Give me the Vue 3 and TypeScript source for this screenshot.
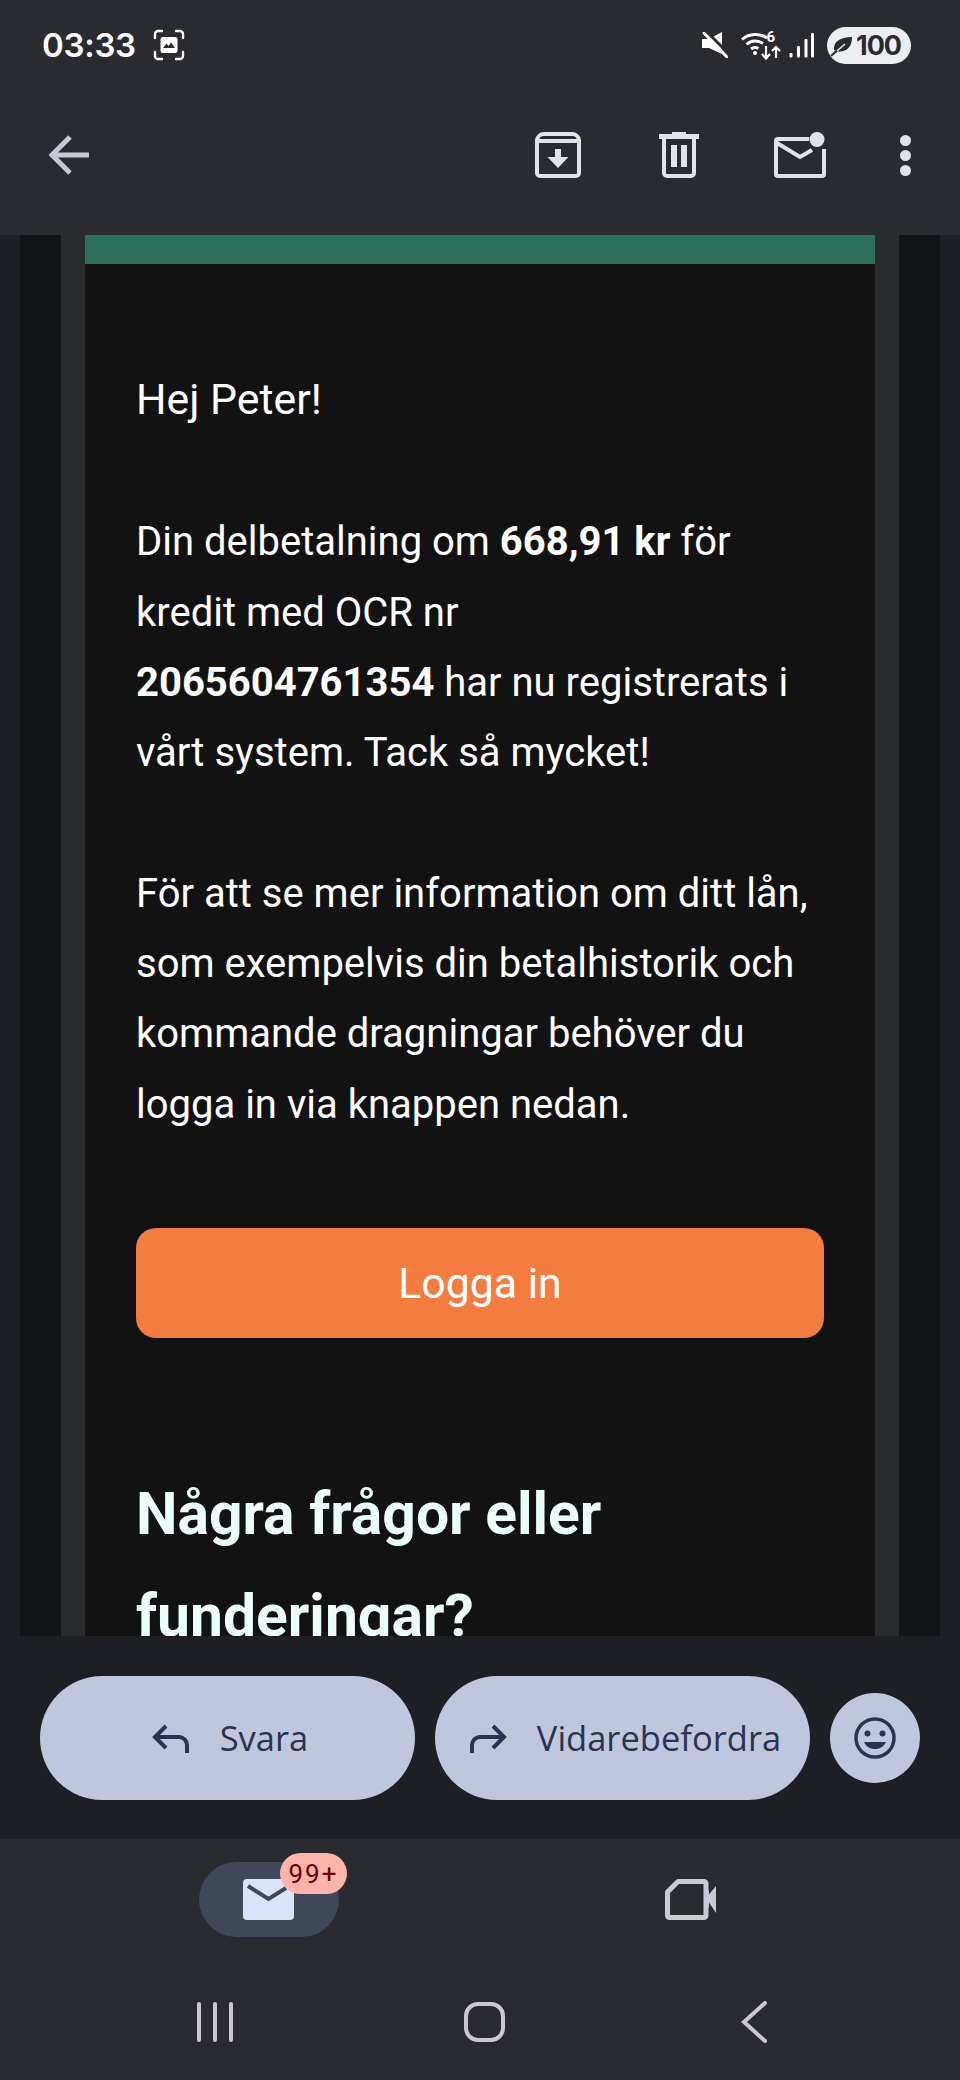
<script setup lang="ts">
const paragraphs = 1
void paragraphs
</script>

<template>
  <div class="phone">
    <header class="top">
      <div class="status">
        <span class="time">03:33</span>
        <svg class="shot" width="32" height="32" viewBox="0 0 32 32">
          <path d="M2 9V5a3 3 0 0 1 3-3h4M23 2h4a3 3 0 0 1 3 3v4M30 23v4a3 3 0 0 1-3 3h-4M9 30H5a3 3 0 0 1-3-3v-4" fill="none" stroke="#fff" stroke-width="2.400" stroke-linecap="round"/>
          <rect x="7.500" y="8" width="17" height="16" rx="2.500" fill="#fff"/>
          <path d="M10 19l3.500-4.500 2 2.500 2.500-3.500 4 5.500z" fill="#2a2b31"/>
        </svg>
        <div class="status-right">
          <svg width="26" height="26" viewBox="0 0 26 26">
            <path d="M0 7h7L20 0v22L7 16H0z" fill="#fff"/>
            <path d="M6 1l21 21" stroke="#2a2b31" stroke-width="3"/>
            <path d="M2 1l23 24" stroke="#fff" stroke-width="3" stroke-linecap="round"/>
          </svg>
          <svg class="wifi" width="40" height="34" viewBox="0 -4 40 34">
            <path d="M1 8.500C8 2 19 2 26 7M5.500 13.500C10.500 9 17 9 22 12.500M10 18c2.500-2 5-2 7.500-.5" fill="none" stroke="#fff" stroke-width="3"/>
            <circle cx="14" cy="22" r="2" fill="#fff"/>
            <text x="25.500" y="11" class="six">6</text>
            <path d="M25 15v12M21 23l4 4.500 4-4.500M35 27V16M31 20l4-4 4 4" fill="none" stroke="#fff" stroke-width="2.200"/>
          </svg>
          <svg width="26" height="26" viewBox="0 0 26 26">
            <g fill="#fff">
              <rect x="0.500" y="21" width="3" height="4.500" rx="1"/>
              <rect x="8" y="14" width="3" height="11.500" rx="1"/>
              <rect x="15.500" y="7" width="3" height="18.500" rx="1"/>
              <rect x="22" y="1" width="3" height="24.500" rx="1"/>
            </g>
          </svg>
          <div class="battery">
            <svg width="24" height="24" viewBox="0 0 24 24">
              <path d="M4 17C3 9 10 4 22 4c0 10-5 15-14 14.500z" fill="#2a2b31"/>
              <path d="M1 23L13 12" stroke="#2a2b31" stroke-width="2.200"/>
              <path d="M7 18l8-7" stroke="#eceef1" stroke-width="1.500"/>
            </svg>
            <span>100</span>
          </div>
        </div>
      </div>
      <div class="toolbar">
        <svg class="back" width="40" height="40" viewBox="0 0 40 40">
          <path d="M21 2L3 20l18 18M3 20h37" fill="none" stroke="#c7c8d6" stroke-width="5"/>
        </svg>
        <div class="actions">
          <div class="action">
            <svg width="46" height="46" viewBox="0 0 46 46">
              <path d="M9 2h28a7 7 0 0 1 7 6v33a3 3 0 0 1-3 3H5a3 3 0 0 1-3-3V8a7 7 0 0 1 7-6z" fill="none" stroke="#e2e3e9" stroke-width="4" stroke-linejoin="round"/>
              <path d="M3 9h40" stroke="#e2e3e9" stroke-width="4"/>
              <path d="M20 17h6v8h7.500L23 36 12.500 25H20z" fill="#e2e3e9"/>
            </svg>
          </div>
          <div class="action">
            <svg width="40" height="46" viewBox="0 0 40 46">
              <path d="M0 2h13V0h14v2h13v5H0z" fill="#e2e3e9"/>
              <path d="M5 7v34a3 3 0 0 0 3 3h24a3 3 0 0 0 3-3V7" fill="none" stroke="#e2e3e9" stroke-width="4"/>
              <rect x="12" y="13" width="6" height="22" fill="#e2e3e9"/>
              <rect x="22" y="13" width="6" height="22" fill="#e2e3e9"/>
            </svg>
          </div>
          <div class="action">
            <svg width="52" height="46" viewBox="0 0 52 46">
              <path d="M35 7H4a2 2 0 0 0-2 2v33a2 2 0 0 0 2 2h44a2 2 0 0 0 2-2V17" fill="none" stroke="#e2e3e9" stroke-width="4"/>
              <path d="M3 11l23 14 12-7" fill="none" stroke="#e2e3e9" stroke-width="4"/>
              <circle cx="43" cy="7.500" r="7.500" fill="#e2e3e9"/>
            </svg>
          </div>
          <div class="action dots">
            <i></i><i></i><i></i>
          </div>
        </div>
      </div>
    </header>

    <main class="viewport">
      <div class="mail-frame">
        <div class="outer">
          <div class="inner">
            <div class="body">
              <div class="stripe"></div>
              <div class="content">
                <p class="hello">Hej Peter!</p>
                <p>Din delbetalning om <b>668,91 kr</b> för kredit med OCR nr<br><b>2065604761354</b> har nu registrerats i vårt system. Tack så mycket!</p>
                <p>För att se mer information om ditt lån, som exempelvis din betalhistorik och kommande dragningar behöver du logga in via knappen nedan.</p>
                <a class="cta">Logga in</a>
                <h2>Några frågor eller funderingar?</h2>
              </div>
            </div>
          </div>
        </div>
      </div>
    </main>

    <section class="reply">
      <button class="pill">
        <svg width="38" height="30" viewBox="0 0 38 30">
          <path d="M14 2L3 13l11 11M3 13h24a8 8 0 0 1 8 8v8" fill="none" stroke="#2b3350" stroke-width="4"/>
        </svg>
        <span>Svara</span>
      </button>
      <button class="pill">
        <svg width="38" height="30" viewBox="0 0 38 30">
          <path d="M24 2l11 11-11 11M35 13H11a8 8 0 0 0-8 8v8" fill="none" stroke="#2b3350" stroke-width="4"/>
        </svg>
        <span>Vidarebefordra</span>
      </button>
      <button class="emoji">
        <svg width="42" height="42" viewBox="0 0 42 42">
          <circle cx="21" cy="21" r="19" fill="none" stroke="#2b3350" stroke-width="3.500"/>
          <circle cx="13.500" cy="16.500" r="3" fill="#2b3350"/>
          <circle cx="28.500" cy="16.500" r="3" fill="#2b3350"/>
          <path d="M10 25h22c-2 4.500-6 7-11 7s-9-2.500-11-7z" fill="#2b3350"/>
        </svg>
      </button>
    </section>

    <nav class="bottom">
      <div class="tabs">
        <div class="tab">
          <div class="tab-pill">
            <svg width="51" height="41" viewBox="0 0 51 41">
              <rect width="51" height="41" rx="4" fill="#dce2f9"/>
              <path d="M5 7l20.500 13L43 9" fill="none" stroke="#3f4759" stroke-width="4"/>
            </svg>
            <span class="badge">99+</span>
          </div>
        </div>
        <div class="tab">
          <svg width="52" height="41" viewBox="0 0 52 41">
            <path d="M13 2.500h26a2 2 0 0 1 2 2v32a2 2 0 0 1-2 2H4.500a2 2 0 0 1-2-2V13z" fill="none" stroke="#c9cad6" stroke-width="5" stroke-linejoin="round"/>
            <path d="M41 19L51 7v27z" fill="#c9cad6"/>
            <path d="M40 14l4-3v18l-4-3z" fill="#c9cad6"/>
          </svg>
        </div>
      </div>
      <div class="sysnav">
        <div class="sys">
          <svg width="38" height="40" viewBox="0 0 38 40">
            <path d="M3 2v36M19 2v36M35 2v36" stroke="#c9c9cf" stroke-width="4" stroke-linecap="round"/>
          </svg>
        </div>
        <div class="sys">
          <div class="home"></div>
        </div>
        <div class="sys">
          <svg width="26" height="42" viewBox="0 0 26 42">
            <path d="M24 2L3 21l21 19" fill="none" stroke="#c9c9cf" stroke-width="4" stroke-linecap="round"/>
          </svg>
        </div>
      </div>
    </nav>
  </div>
</template>

<style>
html, body { margin: 0; background: #2a2b31; }
</style>

<style scoped>
.phone {
  width: 960px;
  height: 2080px;
  display: flex;
  flex-direction: column;
  overflow: hidden;
  background: #2a2b31;
  font-family: Roboto, "Liberation Sans", sans-serif;
}
.top { height: 235px; flex: none; background: #2a2b31; }
.status {
  height: 90px;
  display: flex;
  align-items: center;
  padding: 0 49px 0 42px;
  box-sizing: border-box;
}
.time {
  font-family: Inter, Roboto, sans-serif;
  font-size: 33px;
  font-weight: 600;
  color: #fff;
  letter-spacing: -0.3px;
}
.shot { margin-left: 17px; }
.status-right { margin-left: auto; display: flex; align-items: center; gap: 14px; }
.wifi { margin-top: -2px; margin-left: -1px; margin-right: -6px; }
.six { font: 700 15px Roboto, sans-serif; fill: #fff; }
.battery {
  width: 84px;
  height: 37px;
  border-radius: 19px;
  background: #eceef1;
  display: flex;
  align-items: center;
  padding-left: 3px;
  box-sizing: border-box;
  margin-left: -2px;
  color: #2a2b31;
  font-family: Inter, Roboto, sans-serif;
  font-size: 27px;
  font-weight: 700;
  letter-spacing: -1px;
}
.battery span { margin-left: 2px; }
.toolbar { height: 145px; display: flex; align-items: flex-start; padding-left: 49px; box-sizing: border-box; padding-top: 45px; }
.back { flex: none; }
.actions { margin-left: auto; display: flex; padding-right: 10px; margin-top: -5px; }
.action { width: 121px; height: 50px; display: flex; align-items: center; justify-content: center; }
.action.dots { width: 90px; flex-direction: column; gap: 4px; }
.dots i { width: 11px; height: 11px; border-radius: 50%; background: #e2e3e9; }

.viewport { flex: none; height: 1401px; overflow: hidden; background: #1e1f24; }
.mail-frame { padding: 0 20px; }
.outer { background: #121317; padding: 0 41px; }
.inner { background: #2a2b2d; padding: 0 24px; }
.body { background: #121212; height: 1500px; }
.stripe { height: 29px; background: #2d6f5b; }
.content { padding: 100px 51px 0; color: #fff; font-size: 40px; line-height: 70.3px; }
.content p { margin: 0 0 70.3px; }
.content .hello { font-size: 42.800px; margin-bottom: 73px; }
.content b { font-weight: 700; }
.cta {
  display: flex;
  align-items: center;
  justify-content: center;
  height: 110px;
  border-radius: 20px;
  background: #f37d40;
  color: #fff;
  font-size: 42.800px;
}
.content p + .cta { margin-top: 88px; }
h2 {
  margin: 125px 0 0;
  color: #eafffb;
  font-size: 58.800px;
  line-height: 102px;
  font-weight: 700;
}

.reply {
  flex: none;
  height: 203px;
  background: #1e1f24;
  display: flex;
  align-items: center;
  padding: 0 40px;
  box-sizing: border-box;
  gap: 20px;
}
.pill {
  flex: none;
  width: 375px;
  height: 124px;
  border: 0;
  border-radius: 62px;
  background: #c0c6dd;
  color: #2b3350;
  display: flex;
  align-items: center;
  justify-content: center;
  gap: 30px;
  font-family: "Open Sans", Roboto, sans-serif;
  font-size: 34.500px;
  padding: 0 0 0 5px;
}
.pill svg { flex: none; margin-top: 2px; }
.emoji {
  flex: none;
  width: 90px;
  height: 90px;
  border: 0;
  padding: 0;
  border-radius: 50%;
  background: #c0c6dd;
  display: flex;
  align-items: center;
  justify-content: center;
}
.bottom { flex: none; height: 241px; background: #2a2b31; }
.tabs {
  display: grid;
  grid-template-columns: 422px 422px;
  padding: 23px 58px 0;
}
.tab { height: 75px; display: flex; align-items: center; justify-content: center; }
.tab-pill {
  position: relative;
  width: 140px;
  height: 75px;
  border-radius: 38px;
  background: #3f4759;
  display: flex;
  align-items: center;
  justify-content: center;
}
.tab-pill svg { margin-left: -1px; }
.badge {
  position: absolute;
  left: 81px;
  top: -9px;
  width: 67px;
  height: 41px;
  border-radius: 21px;
  background: #ffb4ab;
  color: #690005;
  display: flex;
  align-items: center;
  justify-content: center;
  font-size: 26px;
  letter-spacing: 2px;
}
.sysnav {
  display: grid;
  grid-template-columns: repeat(3, 269.500px);
  padding: 65px 0 0 80px;
}
.sys { height: 40px; display: flex; align-items: center; justify-content: center; }
.home {
  width: 41px;
  height: 40px;
  box-sizing: border-box;
  border: 4px solid #c9c9cf;
  border-radius: 14px;
}
</style>
